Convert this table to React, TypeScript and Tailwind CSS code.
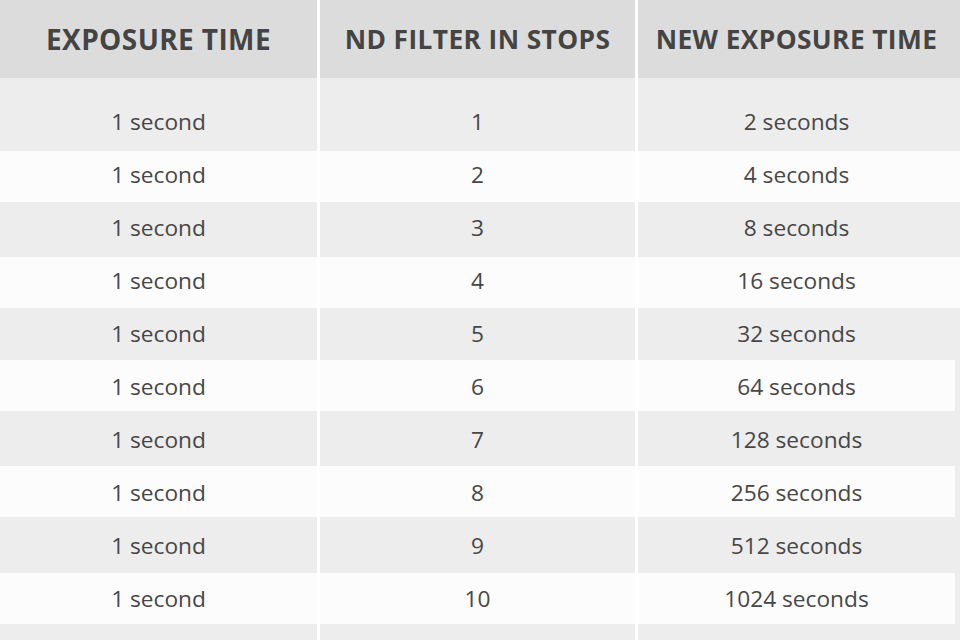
import React from "react";

type Row = { nd: string; out: string; h: string; pt: string; light: boolean; strip: string };

const rows: Row[] = [
  { nd: "1", out: "2 seconds", h: "h-[73px]", pt: "pt-[32px]", light: false, strip: "bg-[#ededed]" },
  { nd: "2", out: "4 seconds", h: "h-[51px]", pt: "pt-[12px]", light: true, strip: "bg-[#fcfcfc]" },
  { nd: "3", out: "8 seconds", h: "h-[55px]", pt: "pt-[14px]", light: false, strip: "bg-[#ededed]" },
  { nd: "4", out: "16 seconds", h: "h-[51px]", pt: "pt-[12px]", light: true, strip: "bg-[#fcfcfc]" },
  { nd: "5", out: "32 seconds", h: "h-[52px]", pt: "pt-[14px]", light: false, strip: "bg-[#ededed]" },
  { nd: "6", out: "64 seconds", h: "h-[51px]", pt: "pt-[15px]", light: true, strip: "bg-[#ededed]" },
  { nd: "7", out: "128 seconds", h: "h-[55px]", pt: "pt-[17px]", light: false, strip: "bg-[#ededed]" },
  { nd: "8", out: "256 seconds", h: "h-[51px]", pt: "pt-[15px]", light: true, strip: "bg-[#ededed]" },
  { nd: "9", out: "512 seconds", h: "h-[56px]", pt: "pt-[17px]", light: false, strip: "bg-[#ededed]" },
  { nd: "10", out: "1024 seconds", h: "h-[51px]", pt: "pt-[14px]", light: true, strip: "bg-[#ededed]" },
];

function Cell({ text, w, bg, pt }: { text: string; w: string; bg: string; pt: string }) {
  return (
    <div className={`${w} ${bg} ${pt} shrink-0 text-center text-[22.7px] leading-[24px] text-[#474747]`}>
      {text}
    </div>
  );
}

export default function App() {
  return (
    <div
      className="w-[960px] h-[640px] overflow-hidden bg-white"
      style={{ fontFamily: '"Open Sans", "Liberation Sans", sans-serif' }}
    >
      <div className="flex h-[78px]">
        <div className="w-[317px] shrink-0 bg-[#dcdcdc] flex items-center justify-center text-[28px] font-bold tracking-[0.4px] text-[#444444]">
          EXPOSURE TIME
        </div>
        <div className="w-[3px] shrink-0 bg-white" />
        <div className="w-[315px] shrink-0 bg-[#dcdcdc] flex items-center justify-center pt-[2px] text-[26.3px] font-bold tracking-[0.4px] text-[#444444]">
          ND FILTER IN STOPS
        </div>
        <div className="w-[3px] shrink-0 bg-white" />
        <div className="w-[317px] shrink-0 bg-[#dcdcdc] flex items-center justify-center pt-[2px] text-[26.3px] font-bold tracking-[0.4px] text-[#444444]">
          NEW EXPOSURE TIME
        </div>
        <div className="w-[5px] shrink-0 bg-[#dcdcdc]" />
      </div>
      {rows.map((r) => {
        const bg = r.light ? "bg-[#fcfcfc]" : "bg-[#ededed]";
        return (
          <div key={r.nd} className={`flex ${r.h}`}>
            <Cell text="1 second" w="w-[317px]" bg={bg} pt={r.pt} />
            <div className="w-[3px] shrink-0 bg-white" />
            <Cell text={r.nd} w="w-[315px]" bg={bg} pt={r.pt} />
            <div className="w-[3px] shrink-0 bg-white" />
            <Cell text={r.out} w="w-[317px]" bg={bg} pt={r.pt} />
            <div className={`w-[5px] shrink-0 ${r.strip}`} />
          </div>
        );
      })}
      <div className="flex h-[16px]">
        <div className="w-[317px] shrink-0 bg-[#ededed]" />
        <div className="w-[3px] shrink-0 bg-white" />
        <div className="w-[315px] shrink-0 bg-[#ededed]" />
        <div className="w-[3px] shrink-0 bg-white" />
        <div className="w-[322px] shrink-0 bg-[#ededed]" />
      </div>
    </div>
  );
}
